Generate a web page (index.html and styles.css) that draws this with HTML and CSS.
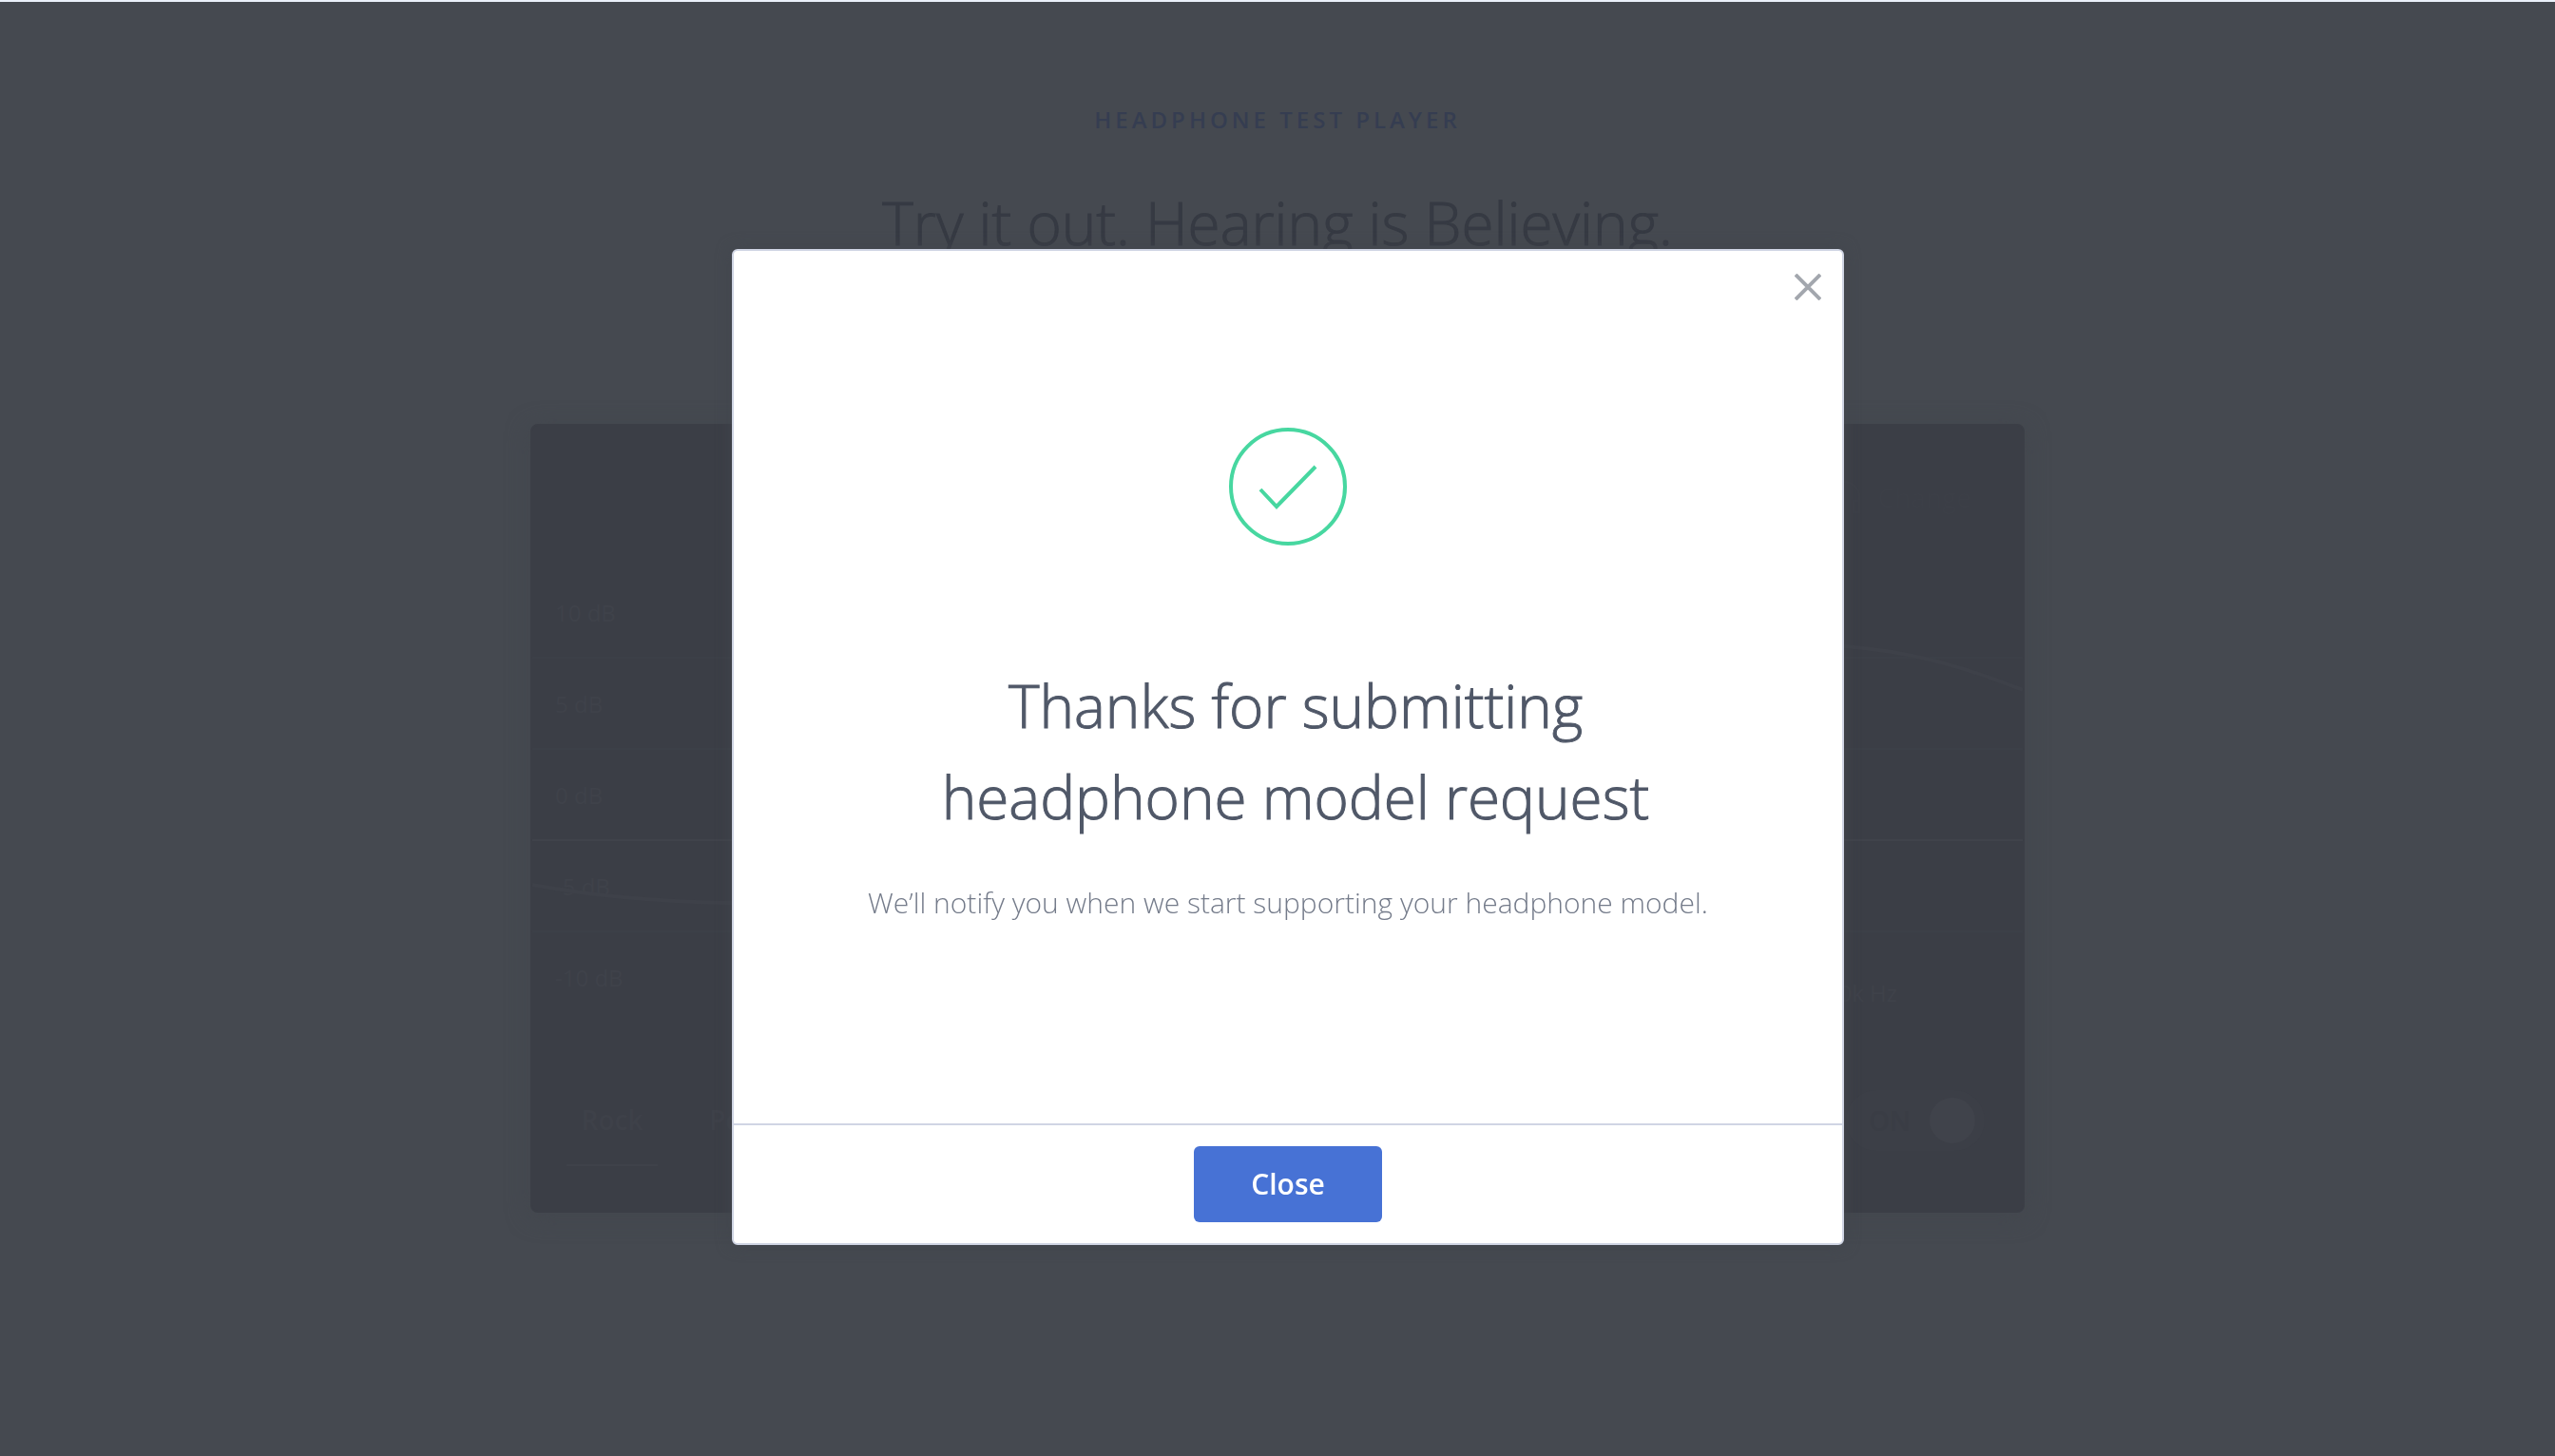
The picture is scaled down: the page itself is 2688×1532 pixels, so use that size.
FILE: index.html
```
<!DOCTYPE html>
<html lang="en">
<head>
<meta charset="utf-8">
<meta name="viewport" content="width=device-width, initial-scale=1">
<title>Headphone Test Player</title>
<link rel="stylesheet" href="styles.css">
</head>
<body>
<main class="page">
  <p class="eyebrow">Headphone Test Player</p>
  <h1 class="title">Try it out. Hearing is Believing.</h1>
  <section class="player" aria-label="Player">
    <header class="player-head">
      <svg class="phones" viewBox="0 0 40 40" aria-hidden="true"><path d="M4 26V20a16 16 0 0 1 32 0v6M4 24h6v12H4zM30 24h6v12h-6z"/></svg>
      <button class="change" type="button">Change</button>
    </header>
    <div class="chart">
      <div class="row">10 dB</div>
      <div class="row">5 dB</div>
      <div class="row zero">0 dB</div>
      <div class="row">-5 dB</div>
      <div class="row last"><span>-10 dB</span><span class="freq">20k Hz</span></div>
      <svg class="curve" viewBox="0 0 1568 480" preserveAspectRatio="none" aria-hidden="true"><path d="M0 334C60 345 130 352 210 353C600 350 900 70 1380 83C1460 89 1520 110 1568 129"/></svg>
    </div>
    <footer class="player-foot">
      <button class="tab active" type="button">Rock</button>
      <button class="tab" type="button">Pop</button>
      <label class="toggle"><span>ON</span><input class="knob" type="checkbox" checked></label>
    </footer>
  </section>
</main>
<div class="overlay">
  <div class="modal" role="dialog" aria-modal="true" aria-labelledby="modal-title">
    <button class="dismiss" type="button" aria-label="Dismiss">
      <svg viewBox="0 0 28 28" aria-hidden="true"><path d="M1 1l26 26M27 1L1 27"/></svg>
    </button>
    <div class="modal-body">
      <svg class="done" viewBox="0 0 124 124" aria-hidden="true"><circle cx="62" cy="62" r="60"/><path d="M33 65l17 18 41-42"/></svg>
      <h2 class="modal-title" id="modal-title">Thanks for submitting<br>headphone model request</h2>
      <p class="modal-text">We’ll notify you when we start supporting your headphone model.</p>
    </div>
    <footer class="modal-foot"><button class="close" type="button">Close</button></footer>
  </div>
</div>
</body>
</html>
```
FILE: styles.css
```
* { box-sizing: border-box; }
body {
  margin: 0;
  min-height: 100vh;
  border-top: 2px solid #eaf0fa;
  background: #454950;
  color: #363a43;
  font-family: "Open Sans", "Noto Sans", sans-serif;
}
h1, h2, p { margin: 0; font-weight: 300; }
h1, h2 { -webkit-text-stroke: 1px currentColor; }
button { padding: 0; border: 0; background: none; color: inherit; font: inherit; }

.page { display: flex; flex-direction: column; align-items: center; padding: 108px 32px 0; }
.eyebrow {
  color: #353d51;
  font-size: 24px;
  font-weight: 600;
  line-height: 32px;
  letter-spacing: 4px;
  text-transform: uppercase;
}
.title { margin-top: 44px; font-size: 62px; line-height: 96px; }
.player {
  width: 100%;
  max-width: 1572px;
  margin-top: 164px;
  border: 2px solid #3b3e46;
  border-radius: 8px;
  background: #3b3e46;
  box-shadow: 0 4px 24px #43474e;
}
.player-head { display: flex; justify-content: flex-end; align-items: center; gap: 16px; height: 149px; padding-right: 54px; color: #3c3f47; }
.phones { width: 40px; height: 40px; fill: none; stroke: #3c3f47; stroke-width: 3; }
.change { font-size: 28px; }
.chart { position: relative; color: #3f424a; font-size: 24px; }
.row {
  display: flex;
  justify-content: space-between;
  align-items: center;
  height: 96px;
  padding: 0 132px 0 24px;
  border-bottom: 2px solid #3c4048;
  font-weight: 400;
}
.zero { border-color: #40434b; }
.last { border-color: transparent; }
.freq { padding-top: 32px; }
.curve { position: absolute; inset: 0; width: 100%; height: 100%; fill: none; stroke: #3e4149; stroke-width: 4; }
.player-foot { display: flex; align-items: center; gap: 32px; height: 197px; padding: 6px 40px 0 36px; color: #3e4149; font-size: 28px; font-weight: 600; }
.tab { width: 96px; height: 96px; border-bottom: 2px solid transparent; }
.active { border-color: #3f424a; }
.toggle {
  display: flex;
  justify-content: space-between;
  align-items: center;
  width: 146px;
  height: 64px;
  margin-left: auto;
  padding: 0 10px 0 24px;
  border-radius: 32px;
  background: #3c3f47;
  color: #3a3d45;
}
.knob { appearance: none; width: 48px; height: 48px; margin: 0; border-radius: 50%; background: #40434b; }

.overlay { position: fixed; inset: 0; display: flex; justify-content: center; align-items: flex-start; padding: 262px 0 0 22px; overflow: auto; }
.modal {
  position: relative;
  width: 100%;
  max-width: 1170px;
  border: 2px solid #d0d5e4;
  border-radius: 6px;
  background: #fff;
  box-shadow: 0 0 16px #42464d;
}
.dismiss { position: absolute; top: 24px; right: 22px; width: 28px; height: 28px; }
.dismiss svg { display: block; fill: none; stroke: #a3a7ae; stroke-width: 4; }
.modal-body { display: flex; flex-direction: column; align-items: center; padding: 186px 32px 208px; text-align: center; }
.done { width: 124px; height: 124px; fill: none; stroke: #47d7a0; stroke-width: 4; }
.modal-title { margin-top: 120px; padding-left: 16px; color: #505868; font-size: 62px; line-height: 96px; }
.modal-text { margin-top: 40px; color: #747b8a; font-size: 30px; line-height: 48px; }
.modal-foot { display: flex; justify-content: center; padding: 22px; border-top: 2px solid #d0d5e4; }
.close { width: 198px; height: 80px; padding-bottom: 2px; border-radius: 6px; background: #4772d5; color: #fff; font-size: 30px; font-weight: 600; }
```
